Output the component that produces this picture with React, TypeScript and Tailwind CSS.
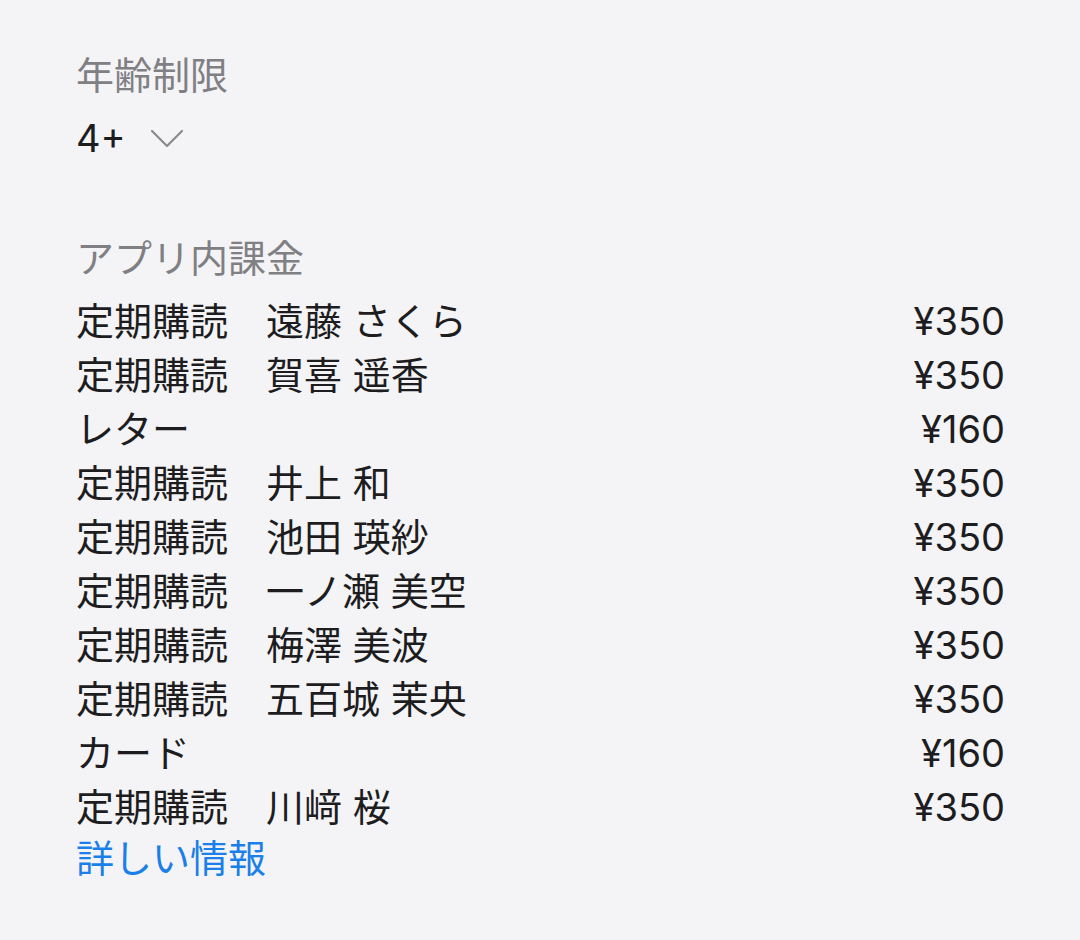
const purchases = [
  { name: "定期購読　遠藤 さくら", price: "¥350" },
  { name: "定期購読　賀喜 遥香", price: "¥350" },
  { name: "レター", price: "¥160" },
  { name: "定期購読　井上 和", price: "¥350" },
  { name: "定期購読　池田 瑛紗", price: "¥350" },
  { name: "定期購読　一ノ瀬 美空", price: "¥350" },
  { name: "定期購読　梅澤 美波", price: "¥350" },
  { name: "定期購読　五百城 茉央", price: "¥350" },
  { name: "カード", price: "¥160" },
  { name: "定期購読　川﨑 桜", price: "¥350" },
];

export default function App() {
  return (
    <div
      className="min-h-[940px] w-[1080px] bg-[#f4f4f6] pl-[76px] pr-[75px] pt-[48px] text-[38px] text-[#1d1d1f]"
      style={{ fontFamily: '"Inter", "Noto Sans CJK JP", sans-serif' }}
    >
      <section>
        <h3 className="leading-[54px] text-[#808084]">年齢制限</h3>
        <button className="mt-[9px] flex items-center leading-[54px]">
          <span>4+</span>
          <svg
            className="ml-[24px] mt-[2px] h-[20px] w-[34px] text-[#8a8a8e]"
            viewBox="0 0 34 20"
            fill="none"
            stroke="currentColor"
            strokeWidth={2.2}
            strokeLinecap="round"
            strokeLinejoin="round"
            aria-hidden="true"
          >
            <path d="M2 2l15 15 15-15" />
          </svg>
        </button>
      </section>

      <section className="mt-[66px]">
        <h3 className="leading-[54px] text-[#808084]">アプリ内課金</h3>
        <ul className="mt-[9px]">
          {purchases.map((item, i) => (
            <li key={i} className="flex justify-between leading-[54px]">
              <span>{item.name}</span>
              <span>{item.price}</span>
            </li>
          ))}
        </ul>
        <a className="block leading-[48px] text-[#1a7fe8]">詳しい情報</a>
      </section>
    </div>
  );
}
